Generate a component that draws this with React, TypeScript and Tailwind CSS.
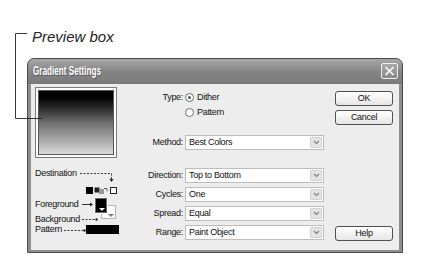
import React from 'react';

const ui = "font-['Liberation_Sans',Arial,sans-serif] text-[9px] leading-none tracking-[-0.3px] text-[#111]";

function Select({ value }: { value: string }) {
  return (
    <div className="flex h-[15px] w-[139px] items-center border border-[#bdbdbd] bg-white pl-[3px]">
      <span className="flex-1">{value}</span>
      <span className="m-[1px] flex h-[11px] w-[12px] items-center justify-center rounded-[1px] border border-[#d2d2d2] bg-[#e4e4e4]">
        <svg width="7" height="5" viewBox="0 0 7 5">
          <path d="M1 1l2.5 2.5L6 1" fill="none" stroke="#808080" strokeWidth="1.2" />
        </svg>
      </span>
    </div>
  );
}

function Row({ label, children, className }: { label: string; children: React.ReactNode; className?: string }) {
  return (
    <div className={`flex h-[15px] items-center ${className ?? ''}`}>
      <span className="w-[65px] pr-[2px] text-right">{label}</span>
      {children}
    </div>
  );
}

function Radio({ label, checked }: { label: string; checked?: boolean }) {
  return (
    <span className="flex items-center gap-[3px]">
      <span className="flex h-[9px] w-[9px] items-center justify-center rounded-full border border-[#6f6f6f] bg-white">
        {checked && <span className="h-[3px] w-[3px] rounded-full bg-[#555]" />}
      </span>
      {label}
    </span>
  );
}

function Button({ label, className }: { label: string; className?: string }) {
  return (
    <div
      className={`flex h-[15px] w-[58px] items-center justify-center rounded-[3px] border border-[#505050] bg-linear-to-b from-white to-[#e6e6e6] ${className ?? ''}`}
    >
      {label}
    </div>
  );
}

export default function App() {
  return (
    <div className="relative h-[258px] w-[431px] overflow-hidden bg-white">
      {/* callout caption */}
      <div className="pl-[32px] pt-[28px] font-['Liberation_Sans',Arial,sans-serif] text-[15px] italic leading-[17px] text-[#222]">
        Preview box
      </div>

      {/* dialog */}
      <div className={`ml-[27px] mt-[13px] flex h-[195px] w-[376px] flex-col rounded-t-[7px] border border-[#4a4a4a] bg-[#8e8e8e] ${ui}`}>
        <div className="flex h-[25px] items-start justify-between rounded-t-[6px] bg-linear-to-b from-[#a8a8a8] via-[#858585] to-[#7a7a7a] pl-[5px] pr-[4px]">
          <span className="mt-[6px] inline-block origin-left scale-x-[0.68] text-[12px] font-bold tracking-normal text-white [text-shadow:1px_1px_0_#555]">
            Gradient Settings
          </span>
          <span className="mt-[4px] flex h-[16px] w-[17px] items-center justify-center rounded-[2px] border border-[#eeeeee] bg-linear-to-b from-[#a8a8a8] to-[#8a8a8a]">
            <svg width="11" height="10" viewBox="0 0 11 10">
              <path d="M1.5 1l8 8M9.5 1l-8 8" stroke="white" strokeWidth="1.6" />
            </svg>
          </span>
        </div>

        <div className="mx-[3px] mb-[2px] flex flex-1 bg-[#ededed]">
          {/* left: preview + legend */}
          <div className="flex w-[89px] flex-col pl-[4px]">
            <div className="mt-[3px] h-[71px] w-[82px] border border-[#7c7c7c] bg-white p-[2px]">
              <div className="h-full w-full border border-[#555] bg-linear-to-b from-black via-[#6e6e6e] to-[#dadada]" />
            </div>
            <div className="mt-[10px] flex h-[10px] items-center">Destination</div>
            <div className="mt-[8px] flex h-[8px] items-center justify-end gap-[1px] pr-[3px]">
              <span className="h-[7px] w-[7px] bg-black" />
              <svg width="14" height="7" viewBox="0 0 14 7">
                <rect x="0.5" y="0.5" width="5" height="5" fill="#222" />
                <rect x="5" y="2" width="5" height="5" fill="#999" />
                <path d="M10 1.5h3v3" fill="none" stroke="#444" strokeWidth="0.8" />
              </svg>
              <span className="ml-[1px] h-[7px] w-[7px] border border-[#222] bg-white" />
            </div>
            <div className="mt-[5px] flex h-[25px] justify-between pr-[4px]">
              <div className="flex flex-col">
                <span className="flex h-[10px] items-center">Foreground</span>
                <span className="mt-[5px] flex h-[10px] items-center">Background</span>
              </div>
              <div className="relative -mt-[1px] h-[22px] w-[21px]">
                <span className="absolute left-[6px] top-[7px] h-[14px] w-[15px] border border-[#b5b5b5] bg-white">
                  <span className="absolute bottom-[1px] right-[1px] h-0 w-0 border-l-[3px] border-r-[3px] border-t-[3px] border-l-transparent border-r-transparent border-t-[#777]" />
                </span>
                <span className="absolute left-0 top-0 h-[15px] w-[12px] border border-[#666] bg-black outline outline-1 outline-white">
                  <span className="absolute bottom-[1px] right-[1px] h-0 w-0 border-l-[3px] border-r-[3px] border-t-[3px] border-l-transparent border-r-transparent border-t-white" />
                </span>
              </div>
            </div>
            <div className="flex h-[10px] items-center justify-between pr-[1px]">
              <span>Pattern</span>
              <span className="h-[9px] w-[33px] bg-black" />
            </div>
          </div>

          {/* form */}
          <div className="flex w-[204px] flex-col">
            <Row label="Type:" className="mt-[6px]">
              <Radio label="Dither" checked />
            </Row>
            <Row label="">
              <Radio label="Pattern" />
            </Row>
            <Row label="Method:" className="mt-[15px]">
              <Select value="Best Colors" />
            </Row>
            <Row label="Direction:" className="mt-[18px]">
              <Select value="Top to Bottom" />
            </Row>
            <Row label="Cycles:" className="mt-[4px]">
              <Select value="One" />
            </Row>
            <Row label="Spread:" className="mt-[4px]">
              <Select value="Equal" />
            </Row>
            <Row label="Range:" className="mt-[4px]">
              <Select value="Paint Object" />
            </Row>
          </div>

          {/* buttons */}
          <div className="ml-[11px] flex flex-col">
            <Button label="OK" className="mt-[7px]" />
            <Button label="Cancel" className="mt-[4px]" />
            <Button label="Help" className="mt-[101px]" />
          </div>
        </div>
      </div>

      {/* leader lines */}
      <svg className="pointer-events-none absolute left-0 top-0" width="431" height="258" viewBox="0 0 431 258">
        <g stroke="#222" strokeWidth="0.9" fill="none">
          <path d="M27 33.5H15.5V118.5H42" />
          <path d="M80 173.5H111.5V179" strokeDasharray="2 1.5" />
          <path d="M82 204.5H90" />
          <path d="M82 219.5H95" strokeDasharray="2 1.5" />
          <path d="M64 230.5H83" strokeDasharray="2 1.5" />
        </g>
        <g fill="#222">
          <path d="M109.5 179h4l-2 3z" />
          <path d="M90 202.5v4l3-2z" />
          <circle cx="96.5" cy="219.5" r="1.2" />
          <circle cx="84.5" cy="230.5" r="1.2" />
        </g>
      </svg>
    </div>
  );
}
